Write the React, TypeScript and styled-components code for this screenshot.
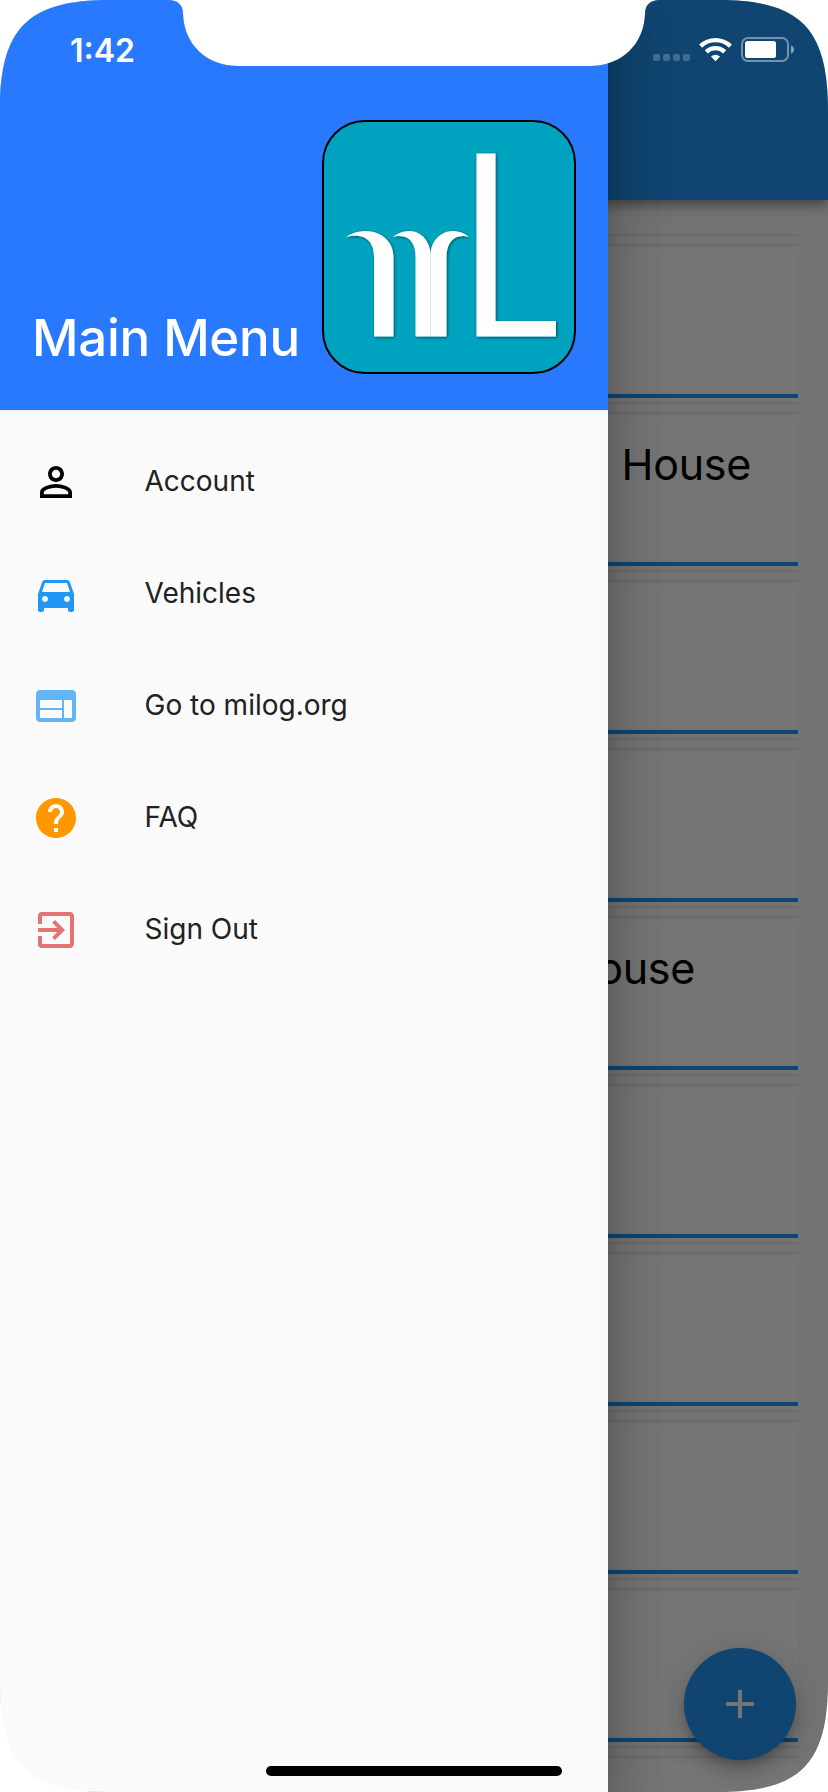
import React from "react";
import styled, { createGlobalStyle } from "styled-components";
import { MdAdd, MdDirectionsCar, MdExitToApp, MdHelp, MdWeb } from "react-icons/md";

const GlobalStyle = createGlobalStyle`
  *, *::before, *::after { box-sizing: border-box; }
  body { margin: 0; background: #fff; font-family: Inter, "Liberation Sans", sans-serif; }
`;

const screenShape =
  "M0 110C0 28 28 0 110 0H168C178 0 183 5 183 14C184 44 206 66 238 66H590C622 66 644 44 645 14C645 5 650 0 660 0H718C800 0 828 28 828 110V1682C828 1764 800 1792 718 1792H110C28 1792 0 1764 0 1682Z";

const Screen = styled.div`
  position: relative;
  width: 828px;
  height: 1792px;
  overflow: hidden;
  background: #fafafa;
  clip-path: path("${screenShape}");
`;

const Page = styled.main`
  display: flex;
  flex-direction: column;
  height: 100%;
`;

const AppBar = styled.header`
  flex: none;
  height: 200px;
  background: #2196f3;
  box-shadow: 0 4px 8px rgba(0, 0, 0, 0.2), 0 8px 10px rgba(0, 0, 0, 0.14), 0 2px 20px rgba(0, 0, 0, 0.12);
`;

const LogList = styled.ul`
  flex: 1;
  min-height: 0;
  margin: 0;
  padding: 34px 30px 0;
  list-style: none;
  overflow: hidden;
`;

const LogItem = styled.li`
  height: 168px;
  padding: 8px 0 4px;
  border-top: 2px solid #e9e9e9;
`;

const LogCard = styled.div<{ $inset: number }>`
  display: flex;
  justify-content: flex-end;
  height: 154px;
  padding: 24px ${(p) => p.$inset}px 0 0;
  border-top: 2px solid #e9e9e9;
  border-bottom: 4px solid #2196f3;
  background: linear-gradient(#fafafa 4px, #fff 4px);
`;

const LogTitle = styled.span`
  font-size: 43px;
  font-weight: 400;
  line-height: 52px;
  letter-spacing: -0.3px;
  color: #000;
`;

const AddButton = styled.button`
  position: absolute;
  right: 32px;
  bottom: 32px;
  display: flex;
  align-items: center;
  justify-content: center;
  width: 112px;
  height: 112px;
  padding: 0;
  border: 0;
  border-radius: 50%;
  background: #2196f3;
  color: #fff;
  box-shadow: 0 6px 10px -2px rgba(0, 0, 0, 0.2), 0 12px 20px rgba(0, 0, 0, 0.14), 0 2px 36px rgba(0, 0, 0, 0.12);
`;

const Scrim = styled.div`
  position: absolute;
  inset: 0 0 0 608px;
  background: rgba(0, 0, 0, 0.54);
`;

const Drawer = styled.aside`
  position: absolute;
  inset: 0 auto 0 0;
  display: flex;
  flex-direction: column;
  width: 608px;
  background: #fafafa;
  box-shadow: 0 16px 20px -10px rgba(0, 0, 0, 0.2), 0 32px 48px 4px rgba(0, 0, 0, 0.14), 0 12px 60px 10px rgba(0, 0, 0, 0.12);
`;

const DrawerHeader = styled.div`
  display: flex;
  align-items: flex-end;
  justify-content: space-between;
  height: 411px;
  padding: 0 32px 36px 32px;
  border-bottom: 1px solid #ececec;
  background: #2979ff;
`;

const DrawerTitle = styled.h1`
  margin: 0 0 6px;
  font-size: 51px;
  font-weight: 500;
  line-height: 60px;
  letter-spacing: -0.3px;
  color: #fff;
  white-space: nowrap;
`;

const Logo = styled.svg`
  flex: none;
  width: 254px;
  height: 254px;
`;

const Menu = styled.nav`
  display: flex;
  flex-direction: column;
  padding-top: 15px;
`;

const MenuItem = styled.a`
  display: flex;
  align-items: center;
  gap: 64px;
  height: 112px;
  padding: 0 32px;
`;

const MenuLabel = styled.span`
  padding: 0 0 2px 0.5px;
  font-size: 28px;
  line-height: 34px;
  color: #212121;
`;

const MenuIcon = styled.span<{ $color: string }>`
  display: flex;
  color: ${(p) => p.$color};
`;

const StatusBar = styled.div`
  position: absolute;
  inset: 0 0 auto 0;
  display: flex;
  justify-content: space-between;
  align-items: center;
  height: 100px;
  padding: 0 33px 0 70px;
`;

const Clock = styled.time`
  font-size: 32px;
  font-weight: 600;
  color: #fff;
`;

const StatusIcons = styled.div`
  display: flex;
  align-items: center;
  gap: 8px;
`;

const HomeIndicator = styled.div`
  position: absolute;
  left: 266px;
  bottom: 16px;
  width: 296px;
  height: 10px;
  border-radius: 5px;
  background: #000;
`;

const PersonIcon = () => (
  <svg width="48" height="48" viewBox="0 0 24 24" fill="currentColor">
    <path d="M12 5.9c1.16 0 2.1.94 2.1 2.1s-.94 2.1-2.1 2.1S9.9 9.16 9.9 8s.94-2.1 2.1-2.1m0 9c2.97 0 6.1 1.46 6.1 2.1v1.1H5.9V17c0-.64 3.13-2.1 6.1-2.1M12 4C9.79 4 8 5.79 8 8s1.79 4 4 4 4-1.79 4-4-1.79-4-4-4zm0 9c-2.67 0-8 1.34-8 4v3h16v-3c0-2.66-5.33-4-8-4z" />
  </svg>
);

const MilogLogo = () => (
  <Logo viewBox="0 0 254 254" role="img" aria-label="milog">
    <defs>
      <filter id="mark-shadow" x="-10%" y="-10%" width="120%" height="120%">
        <feDropShadow dx="1" dy="1" stdDeviation="1.4" floodColor="#000" floodOpacity="0.55" />
      </filter>
    </defs>
    <rect x="1" y="1" width="252" height="252" rx="42" fill="#00a3bf" stroke="#000" strokeWidth="2" />
    <g fill="#fff" filter="url(#mark-shadow)">
      <path d="M23.500 117C30 113 36 111 43 111C60 111 71.500 122 71.500 137V216.500H52V137C52 122 44 112 23.500 117Z" />
      <path d="M70.500 117C76 113 81 111 87 111C100 111 108.500 122 108.500 135V216.500H93.500V137C93.500 123 87 113 70.500 117Z" />
      <path d="M147.500 117C142 113 137 111 131 111C118 111 108.500 122 108.500 135V216.500H124.500V137C124.500 123 132 113 147.500 117Z" />
      <path d="M154.500 33.500H173.500V201H234V216.500H154.500Z" />
    </g>
    <path d="M108.500 136V216" stroke="#dfe8ea" strokeWidth="0.8" />
  </Logo>
);

const SignalDots = () => (
  <svg width="38" height="26" viewBox="0 0 38 26" fill="#fff" fillOpacity="0.22">
    <rect x="0" y="17" width="7" height="7" rx="2" />
    <rect x="10" y="17" width="7" height="7" rx="2" />
    <rect x="20" y="17" width="7" height="7" rx="2" />
    <rect x="30" y="17" width="7" height="7" rx="2" />
  </svg>
);

const WifiIcon = () => (
  <svg width="34" height="26" viewBox="0 0 34 26">
    <g fill="none" stroke="#fff" strokeWidth="4.400">
      <path d="M1.600 9.100A21.500 21.500 0 0 1 31.400 9.100" />
      <path d="M7.300 14.800A13.300 13.300 0 0 1 25.700 14.800" />
    </g>
    <path d="M12 19.600Q16.500 15.800 21 19.600L16.500 24.300Z" fill="#fff" />
  </svg>
);

const BatteryIcon = () => (
  <svg width="54" height="26" viewBox="0 0 54 26">
    <rect x="1" y="1" width="46" height="23" rx="6" fill="none" stroke="#fff" strokeOpacity="0.42" strokeWidth="2" />
    <rect x="4" y="4" width="31" height="17" rx="2.500" fill="#fff" />
    <path d="M50 8.500C51.800 9 53 10.500 53 12.500C53 14.500 51.800 16 50 16.500Z" fill="#fff" fillOpacity="0.5" />
  </svg>
);

const logs = [
  { title: "", inset: 0 },
  { title: "House", inset: 47 },
  { title: "", inset: 0 },
  { title: "", inset: 0 },
  { title: "House", inset: 103 },
  { title: "", inset: 0 },
  { title: "", inset: 0 },
  { title: "", inset: 0 },
  { title: "", inset: 0 },
  { title: "", inset: 0 },
];

const menu = [
  { label: "Account", color: "#000000", icon: <PersonIcon /> },
  { label: "Vehicles", color: "#2196f3", icon: <MdDirectionsCar size={48} /> },
  { label: "Go to milog.org", color: "#64b5f6", icon: <MdWeb size={48} /> },
  { label: "FAQ", color: "#ff9800", icon: <MdHelp size={48} /> },
  { label: "Sign Out", color: "#e57373", icon: <MdExitToApp size={48} /> },
];

export default function App() {
  return (
    <>
      <GlobalStyle />
      <Screen>
        <Page>
          <AppBar />
          <LogList>
            {logs.map((log, i) => (
              <LogItem key={i}>
                <LogCard $inset={log.inset}>{log.title && <LogTitle>{log.title}</LogTitle>}</LogCard>
              </LogItem>
            ))}
          </LogList>
        </Page>
        <AddButton aria-label="Add">
          <MdAdd size={48} />
        </AddButton>
        <Scrim />
        <Drawer>
          <DrawerHeader>
            <DrawerTitle>Main Menu</DrawerTitle>
            <MilogLogo />
          </DrawerHeader>
          <Menu>
            {menu.map((item) => (
              <MenuItem key={item.label}>
                <MenuIcon $color={item.color}>{item.icon}</MenuIcon>
                <MenuLabel>{item.label}</MenuLabel>
              </MenuItem>
            ))}
          </Menu>
        </Drawer>
        <StatusBar>
          <Clock>1:42</Clock>
          <StatusIcons>
            <SignalDots />
            <WifiIcon />
            <BatteryIcon />
          </StatusIcons>
        </StatusBar>
        <HomeIndicator />
      </Screen>
    </>
  );
}
